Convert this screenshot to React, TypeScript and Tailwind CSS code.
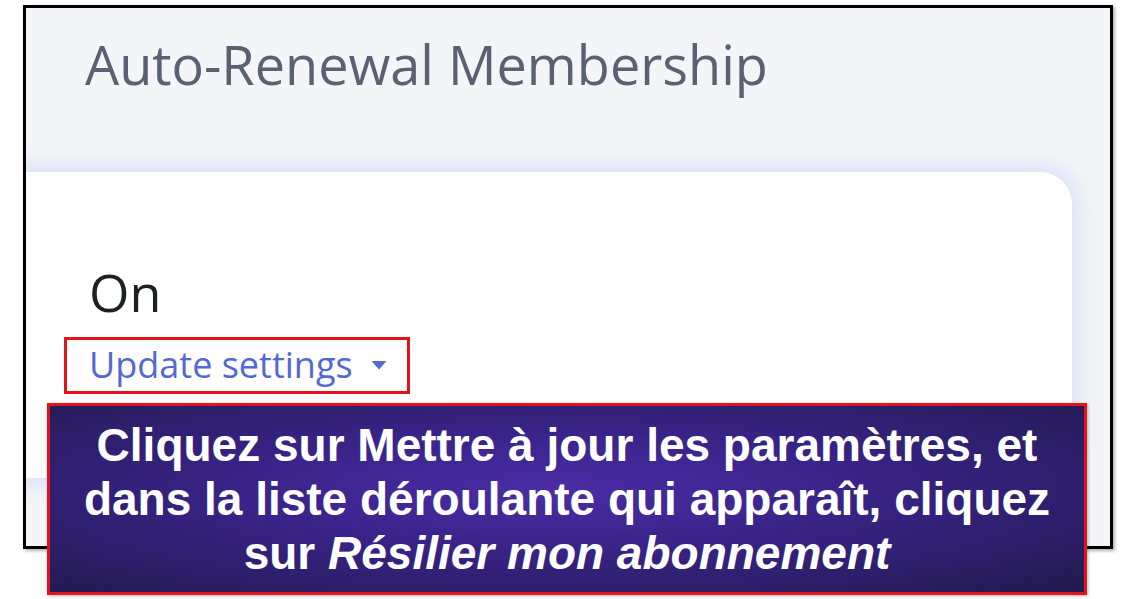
import React from "react";

const Caret = () => (
  <svg width="16" height="10" viewBox="0 0 16 10" className="shrink-0">
    <path d="M0.5 1 L15.5 1 L8 9.5 Z" fill="#5468d4" />
  </svg>
);

const App = () => {
  return (
    <div className="relative h-[599px] w-[1132px] overflow-hidden bg-white font-['Open_Sans',sans-serif]">
      {/* Screenshot frame */}
      <div className="ml-[23px] mt-[5px] h-[544px] w-[1090px] overflow-hidden border-[3px] border-black bg-[#f4f5f8] shadow-[2px_2px_3px_rgba(0,0,0,0.3)]">
        <h1 className="pl-[59px] pt-[29px] text-[54px] font-normal leading-none text-[#5a6172]">
          Auto-Renewal Membership
        </h1>

        {/* Membership card */}
        <div className="-ml-10 mr-[38px] mt-[81px] flex h-[306px] flex-col items-start rounded-[32px] bg-white pl-[103px] pt-[94px] shadow-[0_0_18px_8px_#dbe3f7]">
          <div className="text-[52px] leading-none text-[#1f2023]">On</div>
          <div className="-ml-[25px] mt-[19px] flex items-center gap-[18px] border-[3px] border-[#e3131b] pb-[8px] pl-[22px] pr-[20px] pt-[7px]">
            <span className="text-[36px] leading-none text-[#5468d4]">Update settings</span>
            <Caret />
          </div>
        </div>
      </div>

      {/* Caption overlay */}
      <div className="absolute left-[47px] top-[403px] flex h-[192px] w-[1040px] items-center justify-center border-[3px] border-[#e3131b] bg-[radial-gradient(ellipse_at_48%_45%,#4b2ca6_0%,#3a2388_40%,#211a4e_100%)] shadow-[1px_1px_3px_rgba(0,0,0,0.3)]">
        <p className="text-center font-['Liberation_Sans',Arial,sans-serif] text-[46px] font-bold leading-[54px] text-white">
          Cliquez sur Mettre à jour les paramètres, et
          <br />
          dans la liste déroulante qui apparaît, cliquez
          <br />
          sur <em>Résilier mon abonnement</em>
        </p>
      </div>
    </div>
  );
};

export default App;
